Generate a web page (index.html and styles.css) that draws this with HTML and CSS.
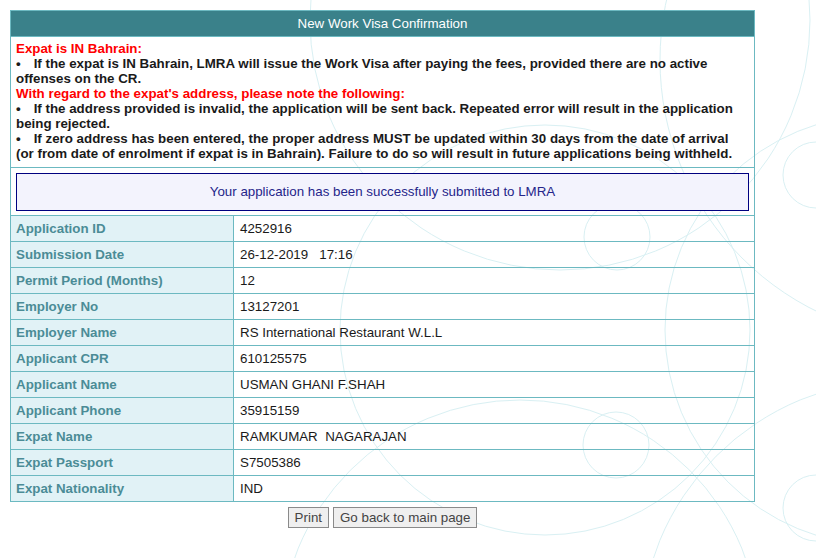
FILE: index.html
```html
<!DOCTYPE html>
<html>
<head>
<meta charset="utf-8">
<link rel="stylesheet" href="styles.css">
</head>
<body>
<svg class="deco" width="816" height="558" viewBox="0 0 816 558" aria-hidden="true">
  <g fill="none" stroke="#d9f0f3" stroke-width="1">
    <circle cx="816" cy="175" r="33"/>
    <circle cx="617" cy="237" r="33"/>
    <circle cx="616" cy="445" r="33"/>
    <circle cx="816" cy="508" r="33"/>
    <circle cx="880" cy="330" r="215"/>
    <circle cx="545" cy="330" r="205"/>
    <circle cx="900" cy="640" r="260"/>
    <circle cx="560" cy="20" r="250"/>
    <circle cx="940" cy="60" r="280"/>
    <circle cx="520" cy="640" r="240"/>
  </g>
</svg>
<div class="page">
  <div class="panel">
    <div class="panel-head">New Work Visa Confirmation</div>
    <div class="notes">
      <div class="red">Expat is IN Bahrain:</div>
      <div class="bold"><span class="bullet">•</span>If the expat is IN Bahrain, LMRA will issue the Work Visa after paying the fees, provided there are no active offenses on the CR.</div>
      <div class="red">With regard to the expat's address, please note the following:</div>
      <div class="bold"><span class="bullet">•</span>If the address provided is invalid, the application will be sent back. Repeated error will result in the application being rejected.</div>
      <div class="bold"><span class="bullet">•</span>If zero address has been entered, the proper address MUST be updated within 30 days from the date of arrival (or from date of enrolment if expat is in Bahrain). Failure to do so will result in future applications being withheld.</div>
    </div>
    <div class="msg-wrap">
      <div class="msg">Your application has been successfully submitted to LMRA</div>
    </div>
    <div class="grid">
      <div class="lbl">Application ID</div><div class="val">4252916</div>
      <div class="lbl">Submission Date</div><div class="val">26-12-2019&nbsp;&nbsp;&nbsp;17:16</div>
      <div class="lbl">Permit Period (Months)</div><div class="val">12</div>
      <div class="lbl">Employer No</div><div class="val">13127201</div>
      <div class="lbl">Employer Name</div><div class="val">RS International Restaurant W.L.L</div>
      <div class="lbl">Applicant CPR</div><div class="val">610125575</div>
      <div class="lbl">Applicant Name</div><div class="val">USMAN GHANI F.SHAH</div>
      <div class="lbl">Applicant Phone</div><div class="val">35915159</div>
      <div class="lbl">Expat Name</div><div class="val">RAMKUMAR&nbsp;&nbsp;NAGARAJAN</div>
      <div class="lbl">Expat Passport</div><div class="val">S7505386</div>
      <div class="lbl">Expat Nationality</div><div class="val">IND</div>
    </div>
  </div>
  <div class="actions">
    <button class="btn">Print</button>
    <button class="btn">Go back to main page</button>
  </div>
</div>
</body>
</html>
```
FILE: styles.css
```css
html, body {
  margin: 0;
  padding: 0;
  background: #ffffff;
}
body {
  font-family: "Liberation Sans", Arial, sans-serif;
  font-size: 13.33px;
  line-height: 15px;
  color: #111;
  position: relative;
  width: 816px;
  height: 558px;
  overflow: hidden;
}
.deco {
  position: absolute;
  left: 0;
  top: 0;
  z-index: 0;
}
.page {
  position: relative;
  z-index: 1;
  padding: 10px 0 0 10px;
  width: 745px;
}
.panel {
  border: 1px solid #6cb9c1;
  width: 743px;
}
.panel-head {
  background: #3a818a;
  color: #ffffff;
  text-align: center;
  height: 25px;
  line-height: 25px;
  border-bottom: 1px solid #6cb9c1;
}
.notes {
  padding: 4px 5px 5px 5px;
  border-bottom: 1px solid #6cb9c1;
  height: 121px;
}
.red {
  color: #ff0000;
  font-weight: bold;
}
.bold {
  font-weight: bold;
  color: #1a1a1a;
}
.bullet {
  margin-right: 13px;
}
.msg-wrap {
  padding: 5px 5px 4px 5px;
  border-bottom: 1px solid #6cb9c1;
}
.msg {
  border: 1px solid #000080;
  background: #f3f3fd;
  color: #25258a;
  text-align: center;
  height: 36px;
  line-height: 36px;
}
.grid {
  display: grid;
  grid-template-columns: 223px 1fr;
}
.lbl, .val {
  height: 25px;
  line-height: 25px;
  border-top: 1px solid #6cb9c1;
}
.grid .lbl:first-child, .grid .lbl:first-child + .val {
  border-top: none;
}
.lbl {
  background: #e1f2f6;
  color: #4b8c96;
  font-weight: bold;
  padding-left: 5px;
  border-right: 1px solid #6cb9c1;
}
.val {
  padding-left: 6px;
  color: #1a1a1a;
}
.actions {
  display: flex;
  justify-content: center;
  gap: 4px;
  margin-top: 5px;
}
.btn {
  font-family: "Liberation Sans", Arial, sans-serif;
  font-size: 13.33px;
  height: 21px;
  padding: 0 6px;
  border: 1px solid #8a8a8a;
  background: #efefef;
  color: #444;
  border-radius: 0;
}
```
